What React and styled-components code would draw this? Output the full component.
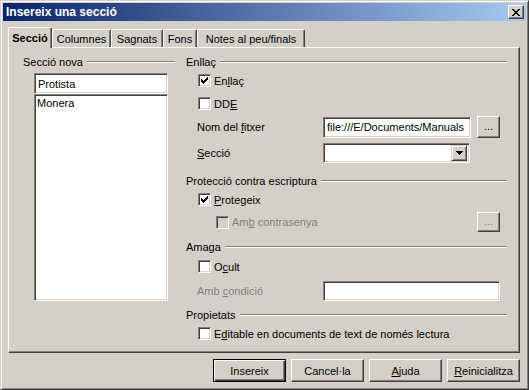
import React from 'react';
import styled, { createGlobalStyle } from 'styled-components';

const GlobalStyle = createGlobalStyle`
  * { box-sizing: border-box; }
  body {
    margin: 0;
    background: #d4d0c8;
    font-family: "Liberation Sans", Arial, sans-serif;
    font-size: 11px;
    color: #000;
  }
`;

const Window = styled.div`
  width: 529px;
  height: 390px;
  background: #d4d0c8;
  border: 1px solid;
  border-color: #d4d0c8 #404040 #404040 #d4d0c8;
  box-shadow: inset 1px 1px #fff, inset -1px -1px #808080;
  padding: 2px;
  display: flex;
  flex-direction: column;
`;

const TitleBar = styled.div`
  height: 18px;
  display: flex;
  align-items: center;
  justify-content: space-between;
  padding: 0 2px 0 3px;
  background: linear-gradient(to right, #0a246a, #a6caf0);
`;

const Title = styled.span`
  color: #fff;
  font-weight: bold;
  font-size: 12px;
`;

const CloseBtn = styled.div`
  width: 16px;
  height: 14px;
  background: #d4d0c8;
  border: 1px solid;
  border-color: #fff #404040 #404040 #fff;
  box-shadow: inset -1px -1px #808080;
  display: flex;
  align-items: center;
  justify-content: center;
`;

const Body = styled.div`
  flex: 1;
  display: flex;
  flex-direction: column;
  padding: 0 6px 0 5px;
`;

const TabStrip = styled.div`
  margin-top: 6px;
  height: 20px;
  display: flex;
  align-items: flex-end;
`;

const Tab = styled.div`
  width: ${p => p.$w}px;
  height: ${p => (p.$active ? 21 : 18)}px;
  margin-bottom: ${p => (p.$active ? -1 : 0)}px;
  position: relative;
  z-index: ${p => (p.$active ? 2 : 0)};
  background: #d4d0c8;
  border-top: 1px solid #fff;
  border-left: 1px solid #fff;
  border-right: 1px solid #404040;
  border-radius: 2px 2px 0 0;
  box-shadow: inset -1px 0 #808080;
  display: flex;
  align-items: center;
  justify-content: center;
  padding-bottom: ${p => (p.$active ? 1 : 0)}px;
  font-weight: ${p => (p.$active ? 'bold' : 'normal')};
  white-space: nowrap;
`;

const Panel = styled.div`
  height: 306px;
  border: 1px solid;
  border-color: #fff #404040 #404040 #fff;
  box-shadow: inset -1px -1px #808080;
  padding: 7px 11px 0 14px;
  display: flex;
  gap: 11px;
`;

const Column = styled.div`
  width: ${p => p.$w}px;
  display: flex;
  flex-direction: column;
`;

const Heading = styled.div`
  height: 14px;
  display: flex;
  align-items: center;
  margin-top: ${p => p.$mt || 0}px;
  white-space: nowrap;
`;

const HeadLine = styled.div`
  flex: 1;
  height: 2px;
  margin-left: 4px;
  border-top: 1px solid #808080;
  border-bottom: 1px solid #fff;
`;

const Sunken = styled.div`
  width: ${p => p.$w}px;
  height: ${p => p.$h}px;
  margin-left: ${p => p.$ml || 0}px;
  margin-top: ${p => p.$mt || 0}px;
  flex: none;
  background: #fff;
  border: 1px solid;
  border-color: #808080 #fff #fff #808080;
  box-shadow: inset 1px 1px #404040, inset -1px -1px #d4d0c8;
  padding: ${p => (p.$list ? '2px 2px' : '0 3px')};
  display: flex;
  align-items: ${p => (p.$list ? 'flex-start' : 'center')};
  white-space: nowrap;
  overflow: hidden;
`;

const CheckRow = styled.div`
  height: 13px;
  display: flex;
  align-items: center;
  gap: 3px;
  margin-left: ${p => p.$ml}px;
  margin-top: ${p => p.$mt}px;
  color: ${p => (p.$disabled ? '#808080' : '#000')};
  white-space: nowrap;
`;

const Box = styled.div`
  width: 13px;
  height: 13px;
  flex: none;
  background: ${p => (p.$disabled ? '#d4d0c8' : '#fff')};
  border: 1px solid;
  border-color: #808080 #fff #fff #808080;
  box-shadow: inset 1px 1px #404040, inset -1px -1px #d4d0c8;
  display: flex;
  align-items: center;
  justify-content: center;
`;

const FieldRow = styled.div`
  height: ${p => p.$h}px;
  margin-top: ${p => p.$mt}px;
  display: flex;
  align-items: center;
`;

const FieldLabel = styled.div`
  width: 137px;
  padding-left: 11px;
  flex: none;
  color: ${p => (p.$disabled ? '#808080' : '#000')};
  white-space: nowrap;
`;

const SmallBtn = styled.div`
  width: 23px;
  height: ${p => p.$h}px;
  margin-left: ${p => (p.$push ? 'auto' : '6px')};
  margin-right: ${p => (p.$push ? '7px' : '0')};
  flex: none;
  background: #d4d0c8;
  border: 1px solid;
  border-color: #fff #404040 #404040 #fff;
  box-shadow: inset -1px -1px #808080;
  display: flex;
  align-items: center;
  justify-content: center;
  padding-bottom: 3px;
  color: ${p => (p.$disabled ? '#808080' : '#000')};
`;

const Select = styled(Sunken)`
  padding: 2px;
  justify-content: flex-end;
`;

const ArrowBtn = styled.div`
  width: 16px;
  height: 16px;
  background: #d4d0c8;
  border: 1px solid;
  border-color: #d4d0c8 #404040 #404040 #d4d0c8;
  box-shadow: inset 1px 1px #fff, inset -1px -1px #808080;
  display: flex;
  align-items: center;
  justify-content: center;
`;

const ButtonRow = styled.div`
  margin-top: 6px;
  display: flex;
  justify-content: flex-end;
  gap: 5px;
`;

const Button = styled.div`
  width: 73px;
  height: 23px;
  background: #d4d0c8;
  border: 1px solid;
  border-color: ${p => (p.$default ? '#000' : '#fff #404040 #404040 #fff')};
  box-shadow: ${p => (p.$default
    ? 'inset 1px 1px #fff, inset -1px -1px #404040, inset -2px -2px #808080'
    : 'inset -1px -1px #808080')};
  display: flex;
  align-items: center;
  justify-content: center;
`;

const U = styled.span`
  text-decoration: underline;
`;

const Check = () => (
  <svg width="7" height="7" viewBox="0 0 7 7" shapeRendering="crispEdges">
    <path d="M0 2h1v3h-1zM1 3h1v3h-1zM2 4h1v3h-1zM3 3h1v3h-1zM4 2h1v3h-1zM5 1h1v3h-1zM6 0h1v3h-1z" fill="#000" />
  </svg>
);

const CheckBox = ({ checked, disabled, ml, mt, children }) => (
  <CheckRow $ml={ml} $mt={mt} $disabled={disabled}>
    <Box $disabled={disabled}>{checked && <Check />}</Box>
    <span>{children}</span>
  </CheckRow>
);

export default function App() {
  return (
    <>
      <GlobalStyle />
      <Window>
        <TitleBar>
          <Title>Insereix una secció</Title>
          <CloseBtn>
            <svg width="8" height="7" viewBox="0 0 8 7" shapeRendering="crispEdges">
              <path d="M0 0h2v1h-2zM6 0h2v1h-2zM1 1h2v1h-2zM5 1h2v1h-2zM2 2h4v1h-4zM3 3h2v1h-2zM2 4h4v1h-4zM1 5h2v1h-2zM5 5h2v1h-2zM0 6h2v1h-2zM6 6h2v1h-2z" fill="#000" />
            </svg>
          </CloseBtn>
        </TitleBar>
        <Body>
          <TabStrip>
            <Tab $active $w={44}>Secció</Tab>
            <Tab $w={59}>Columnes</Tab>
            <Tab $w={52}>Sagnats</Tab>
            <Tab $w={34}>Fons</Tab>
            <Tab $w={108}>Notes al peu/finals</Tab>
          </TabStrip>
          <Panel>
            <Column $w={152}>
              <Heading>
                <span>Secció nova</span>
                <HeadLine />
              </Heading>
              <Sunken $w={134} $h={21} $ml={11} $mt={4}>Protista</Sunken>
              <Sunken $w={134} $h={207} $ml={11} $list>Monera</Sunken>
            </Column>
            <Column $w={321}>
              <Heading>
                <span>Enllaç</span>
                <HeadLine />
              </Heading>
              <CheckBox checked ml={12} mt={5}>En<U>l</U>laç</CheckBox>
              <CheckBox ml={12} mt={10}>DD<U>E</U></CheckBox>
              <FieldRow $h={22} $mt={6}>
                <FieldLabel>Nom del <U>f</U>itxer</FieldLabel>
                <Sunken $w={148} $h={21}>file:///E/Documents/Manuals</Sunken>
                <SmallBtn $h={22}>...</SmallBtn>
              </FieldRow>
              <FieldRow $h={20} $mt={5}>
                <FieldLabel><U>S</U>ecció</FieldLabel>
                <Select $w={147} $h={20}>
                  <ArrowBtn>
                    <svg width="7" height="4" viewBox="0 0 7 4" shapeRendering="crispEdges">
                      <path d="M0 0h7v1h-7zM1 1h5v1h-5zM2 2h3v1h-3zM3 3h1v1h-1z" fill="#000" />
                    </svg>
                  </ArrowBtn>
                </Select>
              </FieldRow>
              <Heading $mt={11}>
                <span>Protecció contra escriptura</span>
                <HeadLine />
              </Heading>
              <CheckBox checked ml={12} mt={5}><U>P</U>rotegeix</CheckBox>
              <FieldRow $h={20} $mt={6}>
                <CheckBox disabled ml={30} mt={0}>Am<U>b</U> contrasenya</CheckBox>
                <SmallBtn $h={20} $push $disabled>...</SmallBtn>
              </FieldRow>
              <Heading $mt={8}>
                <span>Amaga</span>
                <HeadLine />
              </Heading>
              <CheckBox ml={12} mt={6}>O<U>c</U>ult</CheckBox>
              <FieldRow $h={20} $mt={8}>
                <FieldLabel $disabled>Amb <U>c</U>ondició</FieldLabel>
                <Sunken $w={177} $h={20} />
              </FieldRow>
              <Heading $mt={7}>
                <span>Propietats</span>
                <HeadLine />
              </Heading>
              <CheckBox ml={12} mt={5}>E<U>d</U>itable en documents de text de només lectura</CheckBox>
            </Column>
          </Panel>
          <ButtonRow>
            <Button $default>Insereix</Button>
            <Button>Cancel·la</Button>
            <Button><U>A</U>juda</Button>
            <Button><U>R</U>einicialitza</Button>
          </ButtonRow>
        </Body>
      </Window>
    </>
  );
}
